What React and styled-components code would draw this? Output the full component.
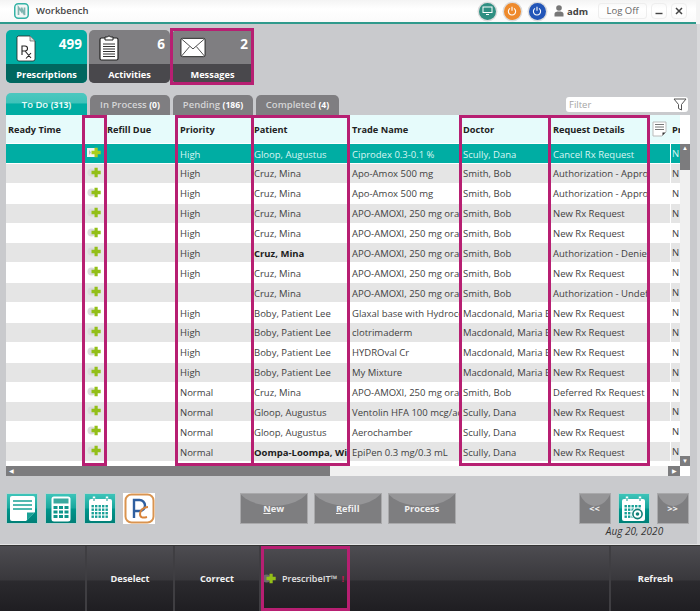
import React from 'react';
import styled, { createGlobalStyle } from 'styled-components';

const GlobalStyle = createGlobalStyle`
  html, body { margin: 0; padding: 0; background: #fff; }
  body { font-family: "Open Sans", "Noto Sans", "Liberation Sans", sans-serif; }
  * { box-sizing: border-box; }
`;

const PINK = '#b71f72';

const Page = styled.div`
  width: 700px;
  height: 611px;
  display: flex;
  flex-direction: column;
  background: #c9cacd;
  overflow: hidden;
  position: relative;
`;

const TitleBar = styled.div`
  height: 24px;
  flex: none;
  display: flex;
  align-items: center;
  background: linear-gradient(#f4f4f4, #fff 40%, #fafafa);
  border-bottom: 2px solid #2f9a8c;
  margin-right: 4px;
  padding: 0 9px 0 14px;
  box-shadow: 4px 0 0 #f4f4f4;
`;

const AppName = styled.span`
  font-size: 9.5px;
  font-weight: 600;
  color: #444;
  margin-left: 7px;
  margin-top: -1px;
`;

const TitleRight = styled.div`
  margin-left: auto;
  display: flex;
  align-items: center;
  height: 100%;
`;

const Round = styled.div`
  width: 17px;
  height: 17px;
  border-radius: 50%;
  background: ${(p) => p.$bg};
  box-shadow: 0 0 0 1.5px #ddd;
  display: flex;
  align-items: center;
  justify-content: center;
  margin-right: ${(p) => p.$gap}px;
`;

const UserName = styled.span`
  font-size: 9.5px;
  font-weight: 700;
  color: #444;
  margin-left: 3px;
`;

const LogOff = styled.div`
  width: 49px;
  height: 16px;
  margin-left: 10px;
  border: 1px solid #eee;
  border-radius: 3px;
  font-size: 9.5px;
  color: #666;
  text-align: center;
  line-height: 14px;
`;

const WinBtn = styled.div`
  width: 16px;
  height: 16px;
  margin-left: 4px;
  border: 1px solid #eee;
  border-radius: 4px;
  display: flex;
  align-items: center;
  justify-content: center;
`;

const Content = styled.div`
  flex: 1;
  display: flex;
  flex-direction: column;
  padding: 6px 0 0 6px;
  border-right: 3px solid #d9dadc;
`;

const TileRow = styled.div`
  display: flex;
  gap: 2px;
  height: 53px;
`;

const Tile = styled.div`
  width: 81px;
  border-radius: 5px;
  overflow: hidden;
  display: flex;
  flex-direction: column;
  position: relative;
  background: ${(p) => (p.$active ? '#00ada3' : '#7f7e81')};
`;

const TileTop = styled.div`
  flex: 1;
  display: flex;
  justify-content: space-between;
  padding: 3px 5px 0 10px;
`;

const TileCount = styled.span`
  font-size: 13.5px;
  font-weight: 700;
  color: #fff;
  line-height: 22px;
`;

const TileLabel = styled.div`
  height: 19px;
  flex: none;
  background: ${(p) => (p.$active ? '#00675f' : '#49484c')};
  color: #fff;
  font-size: 9.2px;
  font-weight: 700;
  line-height: 21px;
  text-align: center;
`;

const MessagesMark = styled.div`
  position: absolute;
  left: 170px;
  top: 28px;
  width: 84px;
  height: 57px;
  border: 3px solid ${PINK};
  pointer-events: none;
`;

const ToolRow = styled.div`
  height: 25px;
  margin-top: 7px;
  display: flex;
  align-items: flex-end;
  gap: 3px;
  padding-right: 9px;
`;

const Tab = styled.div`
  width: ${(p) => p.$w}px;
  height: ${(p) => (p.$active ? 22 : 20)}px;
  border-radius: 5px 5px 0 0;
  background: ${(p) => (p.$active ? 'linear-gradient(#4cc7bf 0, #3fc2b9 45%, #00ada3 50%)' : '#7f7e81')};
  color: ${(p) => (p.$active ? '#e9fbf9' : '#d5d5d6')};
  font-size: 9.5px;
  font-weight: 600;
  text-align: center;
  line-height: ${(p) => (p.$active ? 23 : 20)}px;
  b { font-weight: 700; color: ${(p) => (p.$active ? '#e9fbf9' : '#fff')}; font-size: 8.6px; }
`;

const FilterBox = styled.div`
  margin-left: auto;
  margin-bottom: 3px;
  width: 122px;
  height: 15px;
  background: #fff;
  border-radius: 3px;
  display: flex;
  align-items: center;
  justify-content: space-between;
  padding: 0 1px 0 3px;
  font-size: 9.5px;
  color: #a5a5a5;
`;

const TableWrap = styled.div`
  width: 684px;
  height: 361px;
  background: #fff;
  display: flex;
  flex-direction: column;
  position: relative;
`;

const COLS = '76px 24px 72px 74px 98px 111px 90px 98px 21px 10px';

const HeadRow = styled.div`
  height: 29px;
  flex: none;
  width: 674px;
  display: grid;
  grid-template-columns: ${COLS};
  align-items: center;
  background: #e6fbfb;
  border-bottom: 1px solid #fff;
`;

const HeadCell = styled.div`
  font-size: 9.2px;
  font-weight: 700;
  color: #222;
  padding-left: ${(p) => p.$pad ?? 2}px;
  white-space: nowrap;
  overflow: hidden;
  display: flex;
  align-items: center;
`;

const Row = styled.div`
  height: 19.875px;
  width: 674px;
  display: grid;
  grid-template-columns: ${COLS};
  align-items: center;
  border-bottom: 1px solid #fff;
  background: ${(p) => (p.$selected ? '#00ada3' : p.$even ? '#e5e5e5' : '#fff')};
  color: ${(p) => (p.$selected ? '#d9f6f3' : '#3f3f3f')};
`;

const Cell = styled.div`
  font-size: 9.5px;
  font-weight: ${(p) => (p.$bold ? 700 : 400)};
  color: ${(p) => (p.$bold ? '#1c1c1c' : 'inherit')};
  padding-left: 2px;
  white-space: nowrap;
  overflow: hidden;
  line-height: 19px;
  height: 18px;
`;

const FlagCell = styled(Cell)`
  border-left: 1px solid #fff;
  padding-left: 1px;
  height: 19px;
`;

const IconCell = styled.div`
  display: flex;
  justify-content: center;
  margin-top: -2px;
`;

const VScroll = styled.div`
  position: absolute;
  right: 0;
  top: 29px;
  width: 10px;
  height: 322px;
  background: #f0f0f0;
`;

const VThumb = styled.div`
  height: 26px;
  background: #7c7c7e;
  color: #fff;
  font-size: 6px;
  text-align: center;
  line-height: 9px;
`;

const VDown = styled.div`
  position: absolute;
  bottom: 0;
  left: 0;
  width: 10px;
  height: 10px;
  background: #7c7c7e;
  color: #fff;
  font-size: 6px;
  text-align: center;
  line-height: 10px;
`;

const HScroll = styled.div`
  margin-top: auto;
  width: 674px;
  height: 10px;
  background: #f0f0f0;
  display: flex;
  justify-content: space-between;
`;

const HThumb = styled.div`
  width: 324px;
  background: #7c7c7e;
  color: #fff;
  font-size: 6px;
  padding-left: 3px;
  line-height: 10px;
`;

const HRight = styled.div`
  width: 12px;
  background: #7c7c7e;
  color: #fff;
  font-size: 6px;
  text-align: center;
  line-height: 10px;
`;

const ColumnMark = styled.div`
  position: absolute;
  top: 0;
  left: ${(p) => p.$x - 6}px;
  width: ${(p) => p.$w}px;
  height: 351px;
  border: 3px solid ${PINK};
  pointer-events: none;
`;

const ActionRow = styled.div`
  display: flex;
  align-items: flex-start;
  margin-top: 17px;
`;

const IconGroup = styled.div`
  display: flex;
  gap: 7px;
  width: 234px;
`;

const SquareIcon = styled.div`
  width: 32px;
  height: 31px;
  flex: none;
  background: linear-gradient(#3dc4b9, #18a79d 48%, #00968c 52%, #007f77);
  border: 1px solid #b6d2d0;
  display: flex;
  align-items: center;
  justify-content: center;
`;

const LogoIcon = styled(SquareIcon)`
  background: #fff;
  border: none;
`;

const GlossButton = styled.div`
  width: ${(p) => p.$w}px;
  height: 31px;
  position: relative;
  overflow: hidden;
  background: #7e7e80;
  border: 1px solid #a9a9ab;
  color: #f0f0f0;
  font-size: 9.2px;
  font-weight: 700;
  text-align: center;
  line-height: 30px;
  margin-left: ${(p) => p.$gap ?? 0}px;
  span { position: relative; }
  u { text-decoration-thickness: 1px; }
  &::before {
    content: '';
    position: absolute;
    left: -10%;
    width: 120%;
    top: -14px;
    height: 26px;
    background: #969698;
    border-radius: 0 0 50% 50% / 0 0 100% 100%;
  }
`;

const DateNav = styled.div`
  margin-left: 123px;
  display: flex;
  flex-direction: column;
  align-items: center;
  width: 110px;
`;

const DateButtons = styled.div`
  display: flex;
  gap: 7px;
`;

const DateText = styled.div`
  font-size: 10px;
  font-style: italic;
  color: #333;
  line-height: 14px;
  margin-left: 2px;
`;

const BottomBar = styled.div`
  margin-top: auto;
  height: 66px;
  flex: none;
  display: flex;
  background: linear-gradient(#4d4c51, #39383c 52%, #2b2a2e 54%, #1f1e22);
  border-top: 1px solid #333;
  box-shadow: 0 -1px 0 #e4e4e5;
`;

const BarCell = styled.div`
  width: ${(p) => p.$w}px;
  height: 100%;
  flex: ${(p) => (p.$w ? 'none' : 1)};
  position: relative;
  border-right: ${(p) => (p.$line ? '2px solid #3f3e42' : 'none')};
  display: flex;
  align-items: center;
  justify-content: center;
  color: #f2f2f2;
  font-size: 9.2px;
  font-weight: 700;
  padding-bottom: 1px;
  svg { flex: none; }
`;

const PrescribeCell = styled(BarCell)`
  justify-content: flex-start;
  padding-left: 1px;
`;

const PrescribeText = styled.span`
  font-weight: 600;
  font-size: 9px;
  color: #e4e4e4;
  margin-left: 5px;
`;

const Bang = styled.span`
  color: #b71f50;
  margin-left: 4px;
`;

const BarMark = styled.div`
  position: absolute;
  left: 0;
  top: 0;
  width: 89px;
  height: 65px;
  border: 3px solid ${PINK};
`;

const PLUS = 'M7.5 0.8h3.2v3h3v3.4h-3v3h-3.2v-3h-3V3.8h3z';

const PlusIcon = ({ faint = '#dadada' }) => (
  <svg width="15" height="11" viewBox="0 0 15 11">
    <circle cx="4.5" cy="5.5" r="4" fill={faint} />
    <path d={PLUS} fill="#93bf18" />
  </svg>
);

const SelectedPlus = () => (
  <svg width="15" height="11" viewBox="0 0 15 11">
    <rect x="0" y="1" width="8" height="9" fill="#f4f4f4" />
    <path d="M2 3l2 2.5L2 8z" fill="#bbb" />
    <path d={PLUS} fill="#a9cf1c" />
  </svg>
);

const RxIcon = () => (
  <svg width="20" height="27" viewBox="0 0 20 27" style={{ marginTop: 2 }}>
    <path d="M2 1h12l5 5v18a2 2 0 0 1-2 2H3a2 2 0 0 1-2-2V2z" fill="#fff" stroke="#222" strokeWidth="0.8" />
    <path d="M14 1v5h5" fill="#ddd" stroke="#444" strokeWidth="0.6" />
    <path d="M6 20v-9h3a2.4 2.4 0 0 1 0 5H6M9 16l6 7M15 18l-5 5.5" fill="none" stroke="#222" strokeWidth="1.1" />
  </svg>
);

const ClipboardIcon = () => (
  <svg width="20" height="27" viewBox="0 0 20 27" style={{ marginTop: 1 }}>
    <rect x="1" y="4" width="18" height="22" rx="1.5" fill="#fff" stroke="#222" strokeWidth="1.2" />
    <path d="M6 6V3h2.5a1.6 1.6 0 0 1 3 0H14v3z" fill="#fff" stroke="#222" />
    <path d="M4 10h12M4 12.5h12M4 15h12M4 17.5h12M4 20h12M4 22.5h12" stroke="#333" strokeWidth="1" />
  </svg>
);

const EnvelopeIcon = () => (
  <svg width="26" height="21" viewBox="0 0 27 21" style={{ marginTop: 4, marginLeft: -2 }}>
    <rect x="1" y="1" width="25" height="19" rx="1.5" fill="#fff" stroke="#222" />
    <path d="M1.5 1.5L13.5 12 25.5 1.5M1.5 19.5L10 9.5M25.5 19.5L17 9.5" fill="none" stroke="#333" strokeWidth="0.9" />
  </svg>
);

const LogoMark = () => (
  <svg width="15" height="16" viewBox="0 0 30 32">
    <rect x="1.5" y="1.5" width="27" height="29" rx="7" fill="#f3f7f6" stroke="#35b3a6" strokeWidth="3" />
    <path d="M9 24V9l6 8V9M15 9l6 15V9" fill="none" stroke="#7fb5b0" strokeWidth="3.4" />
  </svg>
);

const PowerGlyph = () => (
  <svg width="10" height="10" viewBox="0 0 10 10">
    <path d="M3 2.4a3.6 3.6 0 1 0 4 0" fill="none" stroke="#fff" strokeWidth="1.1" />
    <path d="M5 0.8v4" stroke="#fff" strokeWidth="1.1" />
  </svg>
);

const MonitorGlyph = () => (
  <svg width="11" height="10" viewBox="0 0 11 10">
    <rect x="0.5" y="0.5" width="10" height="6.5" fill="#fff" />
    <rect x="1.5" y="1.5" width="8" height="4.5" fill="#2f8f82" />
    <path d="M4 8h3v1H4z" fill="#fff" />
  </svg>
);

const PersonIcon = () => (
  <svg width="10" height="12" viewBox="0 0 10 12">
    <circle cx="5" cy="3" r="2.8" fill="#777" />
    <path d="M0.5 11.5V9C0.5 7 3 6.5 5 6.5S9.5 7 9.5 9v2.5z" fill="#777" />
  </svg>
);

const FunnelIcon = () => (
  <svg width="14" height="13" viewBox="0 0 14 13">
    <path d="M1 1h12L8.5 6.5V12L5.5 10.5V6.5z" fill="#fff" stroke="#555" strokeWidth="1" />
  </svg>
);

const NoteHeadIcon = () => (
  <svg width="15" height="16" viewBox="0 0 15 16">
    <path d="M1 1h13v10l-4 4H1z" fill="#fff" stroke="#bbb" />
    <path d="M3 3.5h9M3 6h9M3 8.5h9" stroke="#777" />
    <path d="M10.5 14.5v-3h3z" fill="#333" />
  </svg>
);

const NoteIcon = () => (
  <svg width="27" height="27" viewBox="0 0 27 27">
    <path d="M3 1h21a2 2 0 0 1 2 2v14l-9 9H3a2 2 0 0 1-2-2V3a2 2 0 0 1 2-2z" fill="#fff" />
    <path d="M4 6h19M4 10h19M4 14h19" stroke="#1aa297" strokeWidth="1.6" />
    <path d="M18 25.5v-8h7.5z" fill="#1aa297" />
  </svg>
);

const CalcIcon = () => (
  <svg width="20" height="26" viewBox="0 0 20 26">
    <rect x="0.5" y="0.5" width="19" height="25" rx="2.5" fill="#fff" />
    <rect x="2.5" y="2.5" width="15" height="5" fill="#3aa99f" />
    {[10, 14.5, 19].flatMap((y) => [2.5, 8, 13.5].map((x) => (
      <rect key={`${x}-${y}`} x={x} y={y} width="4" height="3" fill="#0f958b" />
    )))}
  </svg>
);

const CalendarIcon = ({ camera }) => (
  <svg width="25" height="26" viewBox="0 0 25 26">
    <rect x="1" y="3" width="23" height="22" rx="2" fill="#fff" />
    <rect x="3" y="8" width="19" height="15" fill="#fff" />
    <path d="M6 0.5v5M19 0.5v5" stroke="#fff" strokeWidth="2.4" />
    <path d="M6 2v3M19 2v3" stroke="#0f958b" strokeWidth="1" />
    {[9, 12.5, 16, 19.5].flatMap((y) => [3.5, 7, 10.5, 14, 17.5].map((x) => (
      <rect key={`${x}-${y}`} x={x} y={y} width="2.4" height="2.4" fill="#18a097" />
    )))}
    {camera && (
      <g>
        <circle cx="16.5" cy="18" r="6.2" fill="#fff" />
        <circle cx="16.5" cy="18" r="4.6" fill="none" stroke="#0f7f77" strokeWidth="1.6" />
        <circle cx="16.5" cy="18" r="1.8" fill="#0f7f77" />
      </g>
    )}
  </svg>
);

const PrescribeLogo = () => (
  <svg width="31" height="31" viewBox="0 0 31 31">
    <rect x="1.5" y="1.5" width="28" height="28" rx="6" fill="#fff" stroke="#d99450" strokeWidth="2" />
    <path d="M10 25V7h5.5a5.5 5.5 0 0 1 0 11H10" fill="none" stroke="#2f5f9f" strokeWidth="2.4" />
    <path d="M24 14c-4 0-8 3-8 7s3 4 7 3" fill="none" stroke="#d9843a" strokeWidth="2" />
  </svg>
);

const rows = [
  ['High', 'Gloop, Augustus', 'Ciprodex 0.3-0.1 %', 'Scully, Dana', 'Cancel Rx Request'],
  ['High', 'Cruz, Mina', 'Apo-Amox 500 mg', 'Smith, Bob', 'Authorization - Approved'],
  ['High', 'Cruz, Mina', 'Apo-Amox 500 mg', 'Smith, Bob', 'Authorization - Approved'],
  ['High', 'Cruz, Mina', 'APO-AMOXI, 250 mg oral', 'Smith, Bob', 'New Rx Request'],
  ['High', 'Cruz, Mina', 'APO-AMOXI, 250 mg oral', 'Smith, Bob', 'New Rx Request'],
  ['High', 'Cruz, Mina', 'APO-AMOXI, 250 mg oral', 'Smith, Bob', 'Authorization - Denied', true],
  ['High', 'Cruz, Mina', 'APO-AMOXI, 250 mg oral', 'Smith, Bob', 'New Rx Request'],
  ['', 'Cruz, Mina', 'APO-AMOXI, 250 mg oral', 'Smith, Bob', 'Authorization - Undefined'],
  ['High', 'Boby, Patient Lee', 'Glaxal base with Hydrocortisone', 'Macdonald, Maria E', 'New Rx Request'],
  ['High', 'Boby, Patient Lee', 'clotrimaderm', 'Macdonald, Maria E', 'New Rx Request'],
  ['High', 'Boby, Patient Lee', 'HYDROval Cr', 'Macdonald, Maria E', 'New Rx Request'],
  ['High', 'Boby, Patient Lee', 'My Mixture', 'Macdonald, Maria E', 'New Rx Request'],
  ['Normal', 'Cruz, Mina', 'APO-AMOXI, 250 mg oral', 'Smith, Bob', 'Deferred Rx Request'],
  ['Normal', 'Gloop, Augustus', 'Ventolin HFA 100 mcg/actuation', 'Scully, Dana', 'New Rx Request'],
  ['Normal', 'Gloop, Augustus', 'Aerochamber', 'Scully, Dana', 'New Rx Request'],
  ['Normal', 'Oompa-Loompa, Wipple', 'EpiPen 0.3 mg/0.3 mL', 'Scully, Dana', 'New Rx Request', true],
];

export default function App() {
  return (
    <Page>
      <GlobalStyle />
      <TitleBar>
        <LogoMark />
        <AppName>Workbench</AppName>
        <TitleRight>
          <Round $bg="#2f8f82" $gap={8}><MonitorGlyph /></Round>
          <Round $bg="#ee8a2c" $gap={8}><PowerGlyph /></Round>
          <Round $bg="#2356b8" $gap={8}><PowerGlyph /></Round>
          <PersonIcon />
          <UserName>adm</UserName>
          <LogOff>Log Off</LogOff>
          <WinBtn>
            <svg width="8" height="8" viewBox="0 0 8 8"><path d="M0.5 6.5h7" stroke="#444" strokeWidth="1.4" /></svg>
          </WinBtn>
          <WinBtn>
            <svg width="8" height="8" viewBox="0 0 8 8"><path d="M1 1l6 6M7 1l-6 6" stroke="#444" strokeWidth="1.5" /></svg>
          </WinBtn>
        </TitleRight>
      </TitleBar>

      <Content>
        <TileRow>
          <Tile $active>
            <TileTop><RxIcon /><TileCount>499</TileCount></TileTop>
            <TileLabel $active>Prescriptions</TileLabel>
          </Tile>
          <Tile>
            <TileTop><ClipboardIcon /><TileCount>6</TileCount></TileTop>
            <TileLabel>Activities</TileLabel>
          </Tile>
          <Tile>
            <TileTop><EnvelopeIcon /><TileCount>2</TileCount></TileTop>
            <TileLabel>Messages</TileLabel>
          </Tile>
        </TileRow>

        <ToolRow>
          <Tab $active $w={81}>To Do <b>(313)</b></Tab>
          <Tab $w={80}>In Process <b>(0)</b></Tab>
          <Tab $w={80}>Pending <b>(186)</b></Tab>
          <Tab $w={83}>Completed <b>(4)</b></Tab>
          <FilterBox>Filter<FunnelIcon /></FilterBox>
        </ToolRow>

        <TableWrap>
          <HeadRow>
            <HeadCell>Ready Time</HeadCell>
            <HeadCell />
            <HeadCell $pad={1}>Refill Due</HeadCell>
            <HeadCell>Priority</HeadCell>
            <HeadCell>Patient</HeadCell>
            <HeadCell>Trade Name</HeadCell>
            <HeadCell>Doctor</HeadCell>
            <HeadCell>Request Details</HeadCell>
            <HeadCell $pad={3}><NoteHeadIcon /></HeadCell>
            <HeadCell>Pr</HeadCell>
          </HeadRow>
          {rows.map(([priority, patient, trade, doctor, request, bold], i) => (
            <Row key={i} $selected={i === 0} $even={i % 2 === 1}>
              <Cell />
              <IconCell>{i === 0 ? <SelectedPlus /> : <PlusIcon />}</IconCell>
              <Cell />
              <Cell>{priority}</Cell>
              <Cell $bold={bold}>{patient}</Cell>
              <Cell>{trade}</Cell>
              <Cell>{doctor}</Cell>
              <Cell>{request}</Cell>
              <Cell />
              <FlagCell>N</FlagCell>
            </Row>
          ))}
          <HScroll>
            <HThumb>◀</HThumb>
            <HRight>▶</HRight>
          </HScroll>
          <VScroll>
            <VThumb>▲</VThumb>
            <VDown>▼</VDown>
          </VScroll>
          <ColumnMark $x={82} $w={25} />
          <ColumnMark $x={175} $w={79} />
          <ColumnMark $x={251} $w={99} />
          <ColumnMark $x={459} $w={92} />
          <ColumnMark $x={548} $w={102} />
        </TableWrap>

        <ActionRow>
          <IconGroup>
            <SquareIcon><NoteIcon /></SquareIcon>
            <SquareIcon><CalcIcon /></SquareIcon>
            <SquareIcon><CalendarIcon /></SquareIcon>
            <LogoIcon><PrescribeLogo /></LogoIcon>
          </IconGroup>
          <GlossButton $w={67.5}><span><u>N</u>ew</span></GlossButton>
          <GlossButton $w={67.5} $gap={6.5}><span><u>R</u>efill</span></GlossButton>
          <GlossButton $w={67.5} $gap={6.5}><span>Process</span></GlossButton>
          <DateNav>
            <DateButtons>
              <GlossButton $w={32}><span>&lt;&lt;</span></GlossButton>
              <SquareIcon><CalendarIcon camera /></SquareIcon>
              <GlossButton $w={32}><span>&gt;&gt;</span></GlossButton>
            </DateButtons>
            <DateText>Aug 20, 2020</DateText>
          </DateNav>
        </ActionRow>
      </Content>

      <BottomBar>
        <BarCell $w={87} $line />
        <BarCell $w={88} $line>Deselect</BarCell>
        <BarCell $w={86} $line>Correct</BarCell>
        <PrescribeCell $w={89}>
          <PlusIcon faint="#6a696d" />
          <PrescribeText>PrescribeIT™</PrescribeText>
          <Bang>!</Bang>
          <BarMark />
        </PrescribeCell>
        <BarCell $w={261} $line />
        <BarCell>Refresh</BarCell>
      </BottomBar>
      <MessagesMark />
    </Page>
  );
}
